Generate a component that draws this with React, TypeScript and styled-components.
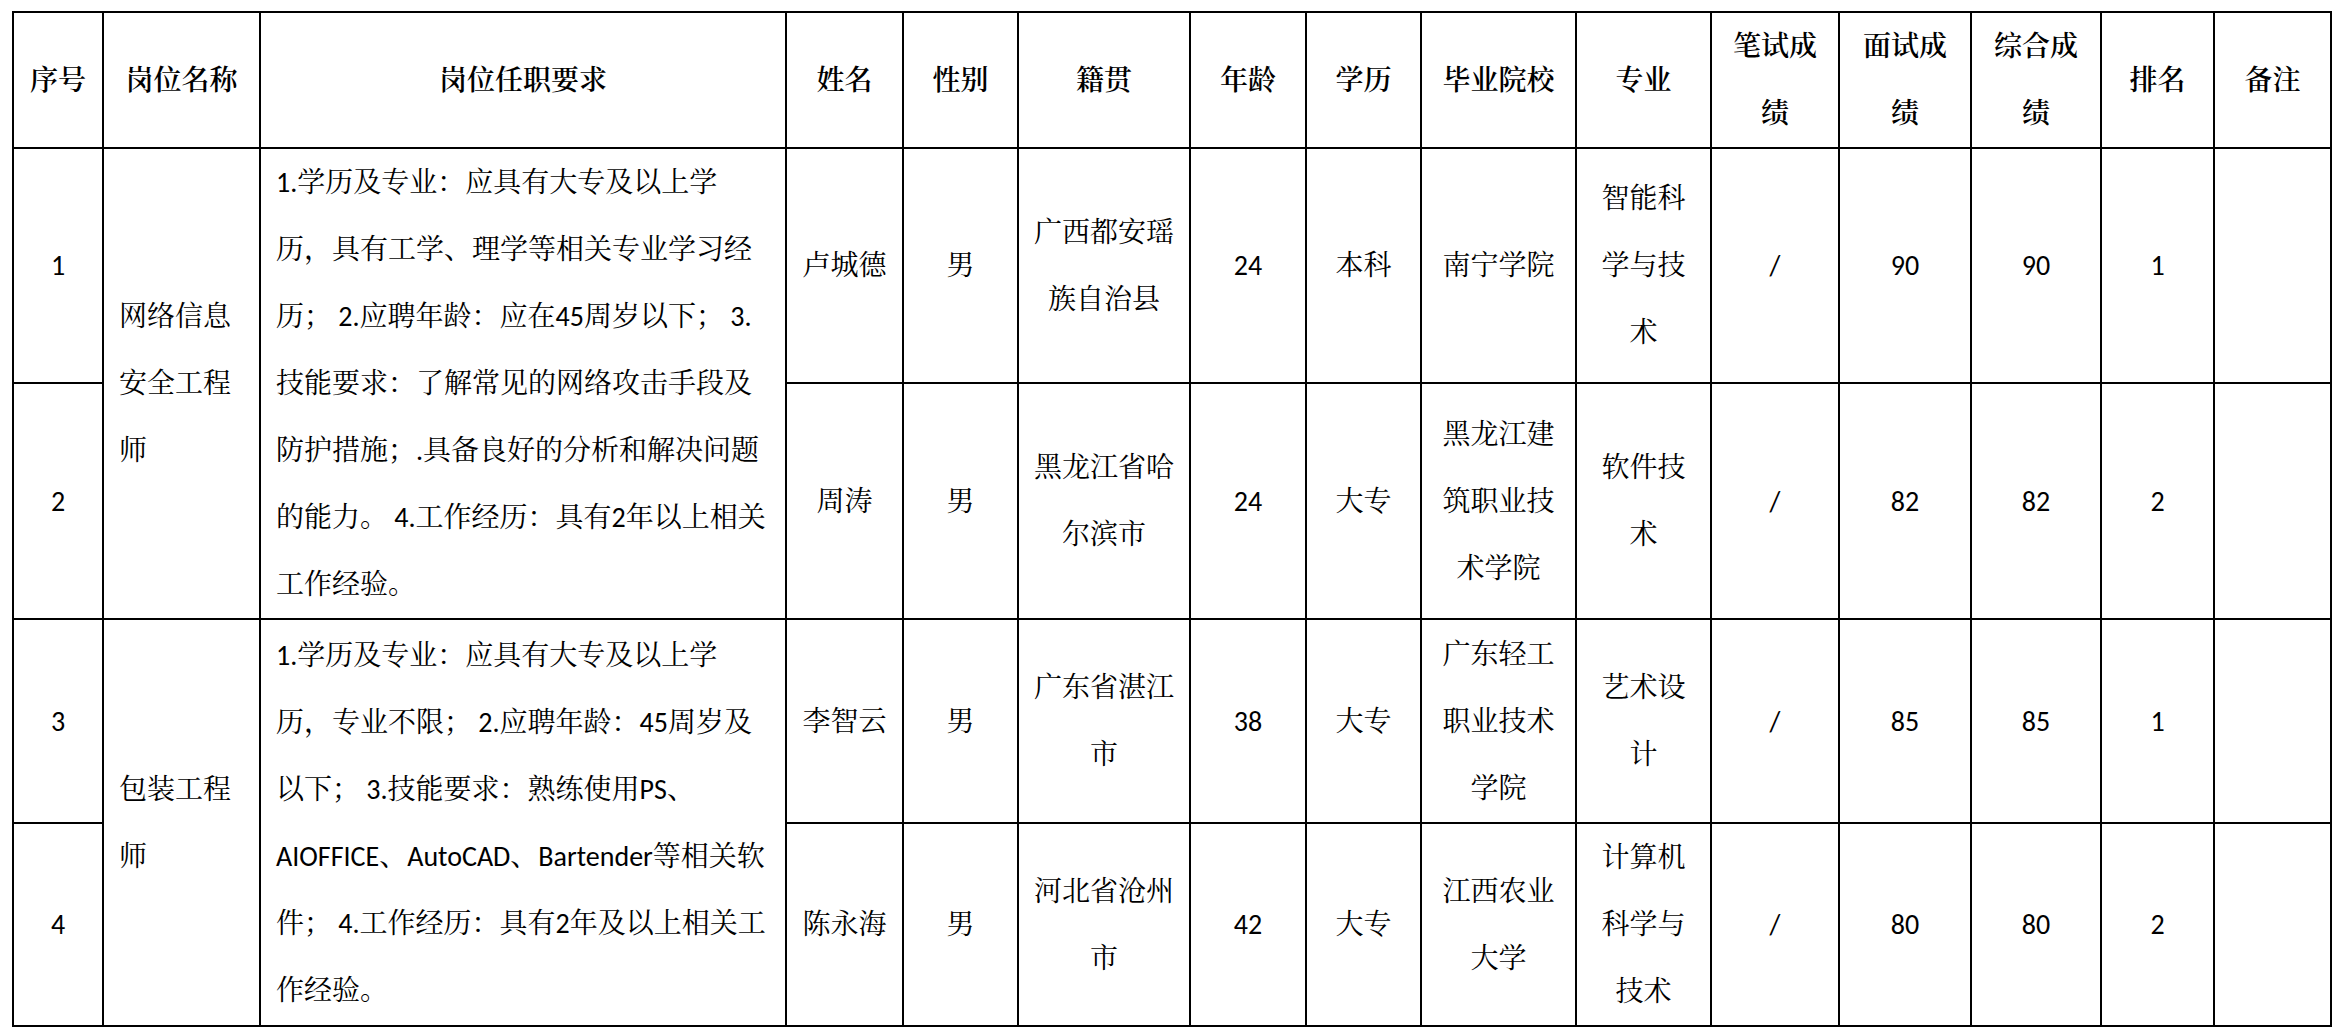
import React from "react";
import styled, { createGlobalStyle } from "styled-components";

const GlobalStyle = createGlobalStyle`
  html, body {
    margin: 0;
    padding: 0;
    background: #ffffff;
  }
  body {
    font-family: "Carlito", "Liberation Sans", "Noto Serif CJK SC", "Noto Sans CJK SC", sans-serif;
    color: #000000;
  }
`;

const Page = styled.div`
  padding: 11px 0 0 12px;
`;

const Table = styled.table`
  border-collapse: collapse;
  table-layout: fixed;
  width: 2320px;
  font-size: 28px;
  line-height: 67px;
  border: 2px solid #000;
`;

const HeadCell = styled.th`
  border: 2px solid #000;
  padding: 0;
  font-weight: 600;
  text-align: center;
  vertical-align: middle;
`;

const Cell = styled.td<{ $left?: boolean }>`
  border: 2px solid #000;
  padding: ${(p) => (p.$left ? "0 0 0 15px" : "0")};
  font-weight: 400;
  text-align: ${(p) => (p.$left ? "left" : "center")};
  vertical-align: middle;
`;

const Line = styled.div`
  white-space: nowrap;
`;

const Row = styled.tr<{ $h: number }>`
  height: ${(p) => p.$h}px;
`;

const Lines = ({ text }: { text: string | string[] }) => {
  const list = Array.isArray(text) ? text : [text];
  return (
    <>
      {list.map((l, i) => (
        <Line key={i}>{l}</Line>
      ))}
    </>
  );
};

const colWidths = [90, 157, 526, 117, 115, 172, 116, 115, 155, 135, 128, 132, 130, 113, 117];

const headers: (string | string[])[] = [
  "序号",
  "岗位名称",
  "岗位任职要求",
  "姓名",
  "性别",
  "籍贯",
  "年龄",
  "学历",
  "毕业院校",
  "专业",
  ["笔试成", "绩"],
  ["面试成", "绩"],
  ["综合成", "绩"],
  "排名",
  "备注",
];

type Person = {
  no: string;
  name: string;
  sex: string;
  origin: string[];
  age: string;
  edu: string;
  school: string[];
  major: string[];
  written: string;
  interview: string;
  total: string;
  rank: string;
  height: number;
};

type Group = {
  post: string[];
  requirement: string[];
  people: Person[];
};

const groups: Group[] = [
  {
    post: ["网络信息", "安全工程", "师"],
    requirement: [
      "1.学历及专业：应具有大专及以上学",
      "历，具有工学、理学等相关专业学习经",
      "历； 2.应聘年龄：应在45周岁以下； 3.",
      "技能要求：了解常见的网络攻击手段及",
      "防护措施；.具备良好的分析和解决问题",
      "的能力。 4.工作经历：具有2年以上相关",
      "工作经验。",
    ],
    people: [
      {
        no: "1",
        name: "卢城德",
        sex: "男",
        origin: ["广西都安瑶", "族自治县"],
        age: "24",
        edu: "本科",
        school: ["南宁学院"],
        major: ["智能科", "学与技", "术"],
        written: "/",
        interview: "90",
        total: "90",
        rank: "1",
        height: 235,
      },
      {
        no: "2",
        name: "周涛",
        sex: "男",
        origin: ["黑龙江省哈", "尔滨市"],
        age: "24",
        edu: "大专",
        school: ["黑龙江建", "筑职业技", "术学院"],
        major: ["软件技", "术"],
        written: "/",
        interview: "82",
        total: "82",
        rank: "2",
        height: 236,
      },
    ],
  },
  {
    post: ["包装工程", "师"],
    requirement: [
      "1.学历及专业：应具有大专及以上学",
      "历，专业不限； 2.应聘年龄：45周岁及",
      "以下； 3.技能要求：熟练使用PS、",
      "AIOFFICE、AutoCAD、Bartender等相关软",
      "件； 4.工作经历：具有2年及以上相关工",
      "作经验。",
    ],
    people: [
      {
        no: "3",
        name: "李智云",
        sex: "男",
        origin: ["广东省湛江", "市"],
        age: "38",
        edu: "大专",
        school: ["广东轻工", "职业技术", "学院"],
        major: ["艺术设", "计"],
        written: "/",
        interview: "85",
        total: "85",
        rank: "1",
        height: 204,
      },
      {
        no: "4",
        name: "陈永海",
        sex: "男",
        origin: ["河北省沧州", "市"],
        age: "42",
        edu: "大专",
        school: ["江西农业", "大学"],
        major: ["计算机", "科学与", "技术"],
        written: "/",
        interview: "80",
        total: "80",
        rank: "2",
        height: 203,
      },
    ],
  },
];

const App = () => {
  return (
    <Page>
      <GlobalStyle />
      <Table>
        <colgroup>
          {colWidths.map((w, i) => (
            <col key={i} style={{ width: w }} />
          ))}
        </colgroup>
        <thead>
          <Row $h={136}>
            {headers.map((h, i) => (
              <HeadCell key={i}>
                <Lines text={h} />
              </HeadCell>
            ))}
          </Row>
        </thead>
        <tbody>
          {groups.map((g) =>
            g.people.map((p, idx) => (
              <Row $h={p.height} key={p.no}>
                <Cell>{p.no}</Cell>
                {idx === 0 && (
                  <>
                    <Cell $left rowSpan={g.people.length}>
                      <Lines text={g.post} />
                    </Cell>
                    <Cell $left rowSpan={g.people.length}>
                      <Lines text={g.requirement} />
                    </Cell>
                  </>
                )}
                <Cell>{p.name}</Cell>
                <Cell>{p.sex}</Cell>
                <Cell>
                  <Lines text={p.origin} />
                </Cell>
                <Cell>{p.age}</Cell>
                <Cell>{p.edu}</Cell>
                <Cell>
                  <Lines text={p.school} />
                </Cell>
                <Cell>
                  <Lines text={p.major} />
                </Cell>
                <Cell>{p.written}</Cell>
                <Cell>{p.interview}</Cell>
                <Cell>{p.total}</Cell>
                <Cell>{p.rank}</Cell>
                <Cell />
              </Row>
            ))
          )}
        </tbody>
      </Table>
    </Page>
  );
};

export default App;
